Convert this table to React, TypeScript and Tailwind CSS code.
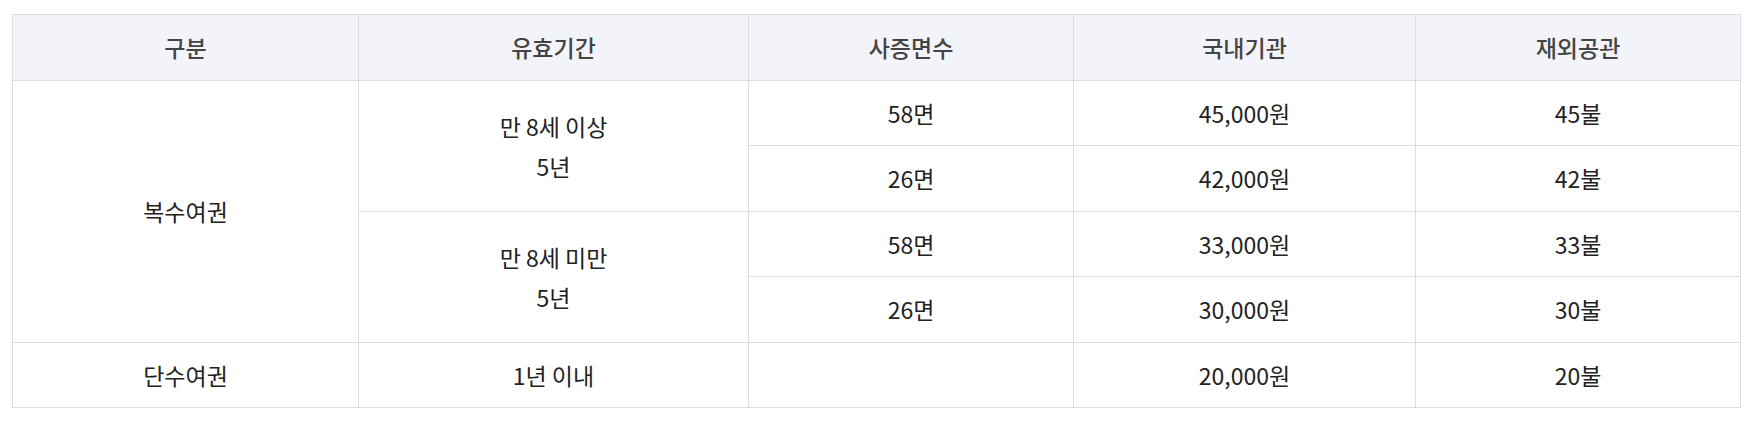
import React from 'react';

interface FeeRow {
  pages: string;
  domestic: string;
  overseas: string;
}

const multiGroups: { period: string[]; rows: FeeRow[] }[] = [
  {
    period: ['만 8세 이상', '5년'],
    rows: [
      { pages: '58면', domestic: '45,000원', overseas: '45불' },
      { pages: '26면', domestic: '42,000원', overseas: '42불' },
    ],
  },
  {
    period: ['만 8세 미만', '5년'],
    rows: [
      { pages: '58면', domestic: '33,000원', overseas: '33불' },
      { pages: '26면', domestic: '30,000원', overseas: '30불' },
    ],
  },
];

const headers = ['구분', '유효기간', '사증면수', '국내기관', '재외공관'];

const cell = 'border border-[#dcdce2] text-center align-middle h-[65.5px] px-4';

const App: React.FC = () => {
  return (
    <div className="bg-white min-h-screen pt-[14px] pl-[12px] font-['Noto_Sans_CJK_KR','Noto_Sans',sans-serif]">
      <table className="w-[1728px] table-fixed border-collapse text-[23px] leading-[1.5] text-[#222]">
        <colgroup>
          <col className="w-[346px]" />
          <col className="w-[390px]" />
          <col className="w-[325px]" />
          <col className="w-[342px]" />
          <col className="w-[325px]" />
        </colgroup>
        <thead>
          <tr className="bg-[#f3f4f9]">
            {headers.map(h => (
              <th key={h} className={`${cell} font-medium text-[#444]`}>
                {h}
              </th>
            ))}
          </tr>
        </thead>
        <tbody>
          {multiGroups.map((group, gi) =>
            group.rows.map((row, ri) => (
              <tr key={`${gi}-${ri}`}>
                {gi === 0 && ri === 0 && (
                  <td rowSpan={4} className={cell}>
                    복수여권
                  </td>
                )}
                {ri === 0 && (
                  <td rowSpan={2} className={`${cell} leading-[40px]`}>
                    {group.period.map(line => (
                      <div key={line}>{line}</div>
                    ))}
                  </td>
                )}
                <td className={cell}>{row.pages}</td>
                <td className={cell}>{row.domestic}</td>
                <td className={cell}>{row.overseas}</td>
              </tr>
            ))
          )}
          <tr>
            <td className={cell}>단수여권</td>
            <td className={cell}>1년 이내</td>
            <td className={cell}></td>
            <td className={cell}>20,000원</td>
            <td className={cell}>20불</td>
          </tr>
        </tbody>
      </table>
    </div>
  );
};

export default App;
